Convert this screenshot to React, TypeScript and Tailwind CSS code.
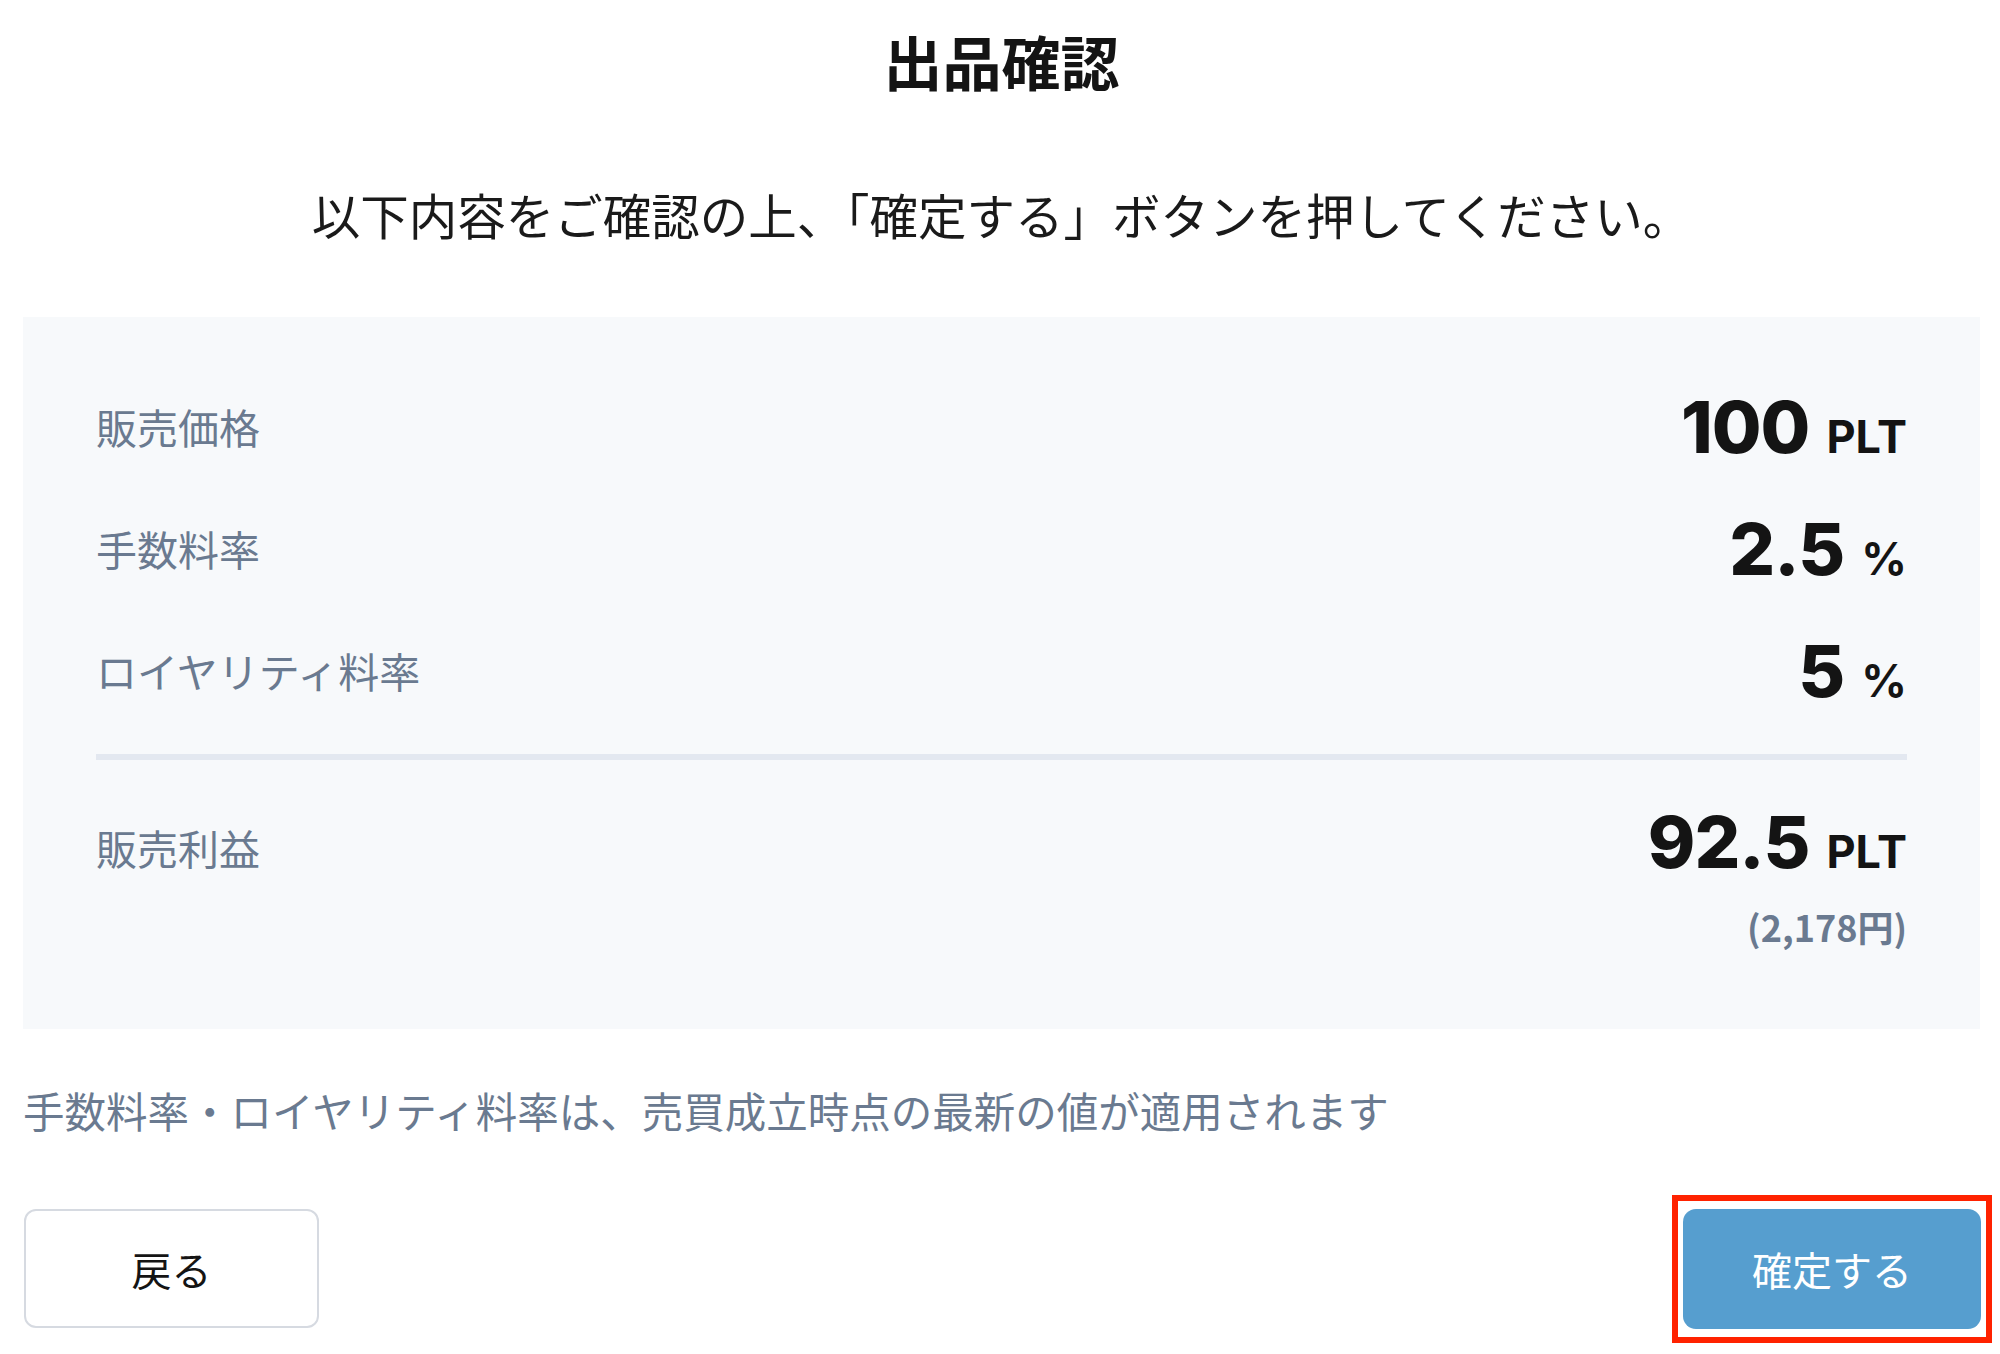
import React from "react";

const jp = { fontFamily: '"Noto Sans CJK JP", "Noto Sans", sans-serif' };
const num = { fontFamily: 'Inter, "Noto Sans CJK JP", sans-serif' };

function Row({ label, value, unit }: { label: string; value: string; unit: string }) {
  return (
    <div className="flex h-[122px] items-center justify-between">
      <div className="text-[41px] leading-none text-[#6a7a90]" style={jp}>
        {label}
      </div>
      <div className="flex items-baseline leading-none text-[#141414]" style={num}>
        <span className="text-[72px] font-extrabold tracking-[-1px]">{value}</span>
        <span className="ml-[17px] text-[45px] font-bold">{unit}</span>
      </div>
    </div>
  );
}

export default function App() {
  return (
    <div className="h-[1354px] w-[2000px] bg-white pl-[23px] pr-[20px]" style={jp}>
      <div className="flex justify-center pt-[31px]">
        <h1 className="text-[59px] font-bold leading-none text-[#141414]">出品確認</h1>
      </div>
      <div className="mt-[100px] flex justify-center">
        <p className="text-[48.5px] leading-none text-[#1a1a1a]">
          以下内容をご確認の上、「確定する」ボタンを押してください。
        </p>
      </div>

      <div className="mt-[78px] h-[712px] bg-[#f7f9fb] px-[73px] pt-[49px]">
        <Row label="販売価格" value="100" unit="PLT" />
        <Row label="手数料率" value="2.5" unit="%" />
        <Row label="ロイヤリティ料率" value="5" unit="%" />
        <div className="mt-[22px] h-[6px] bg-[#e3e8f0]" />
        <div className="flex items-start justify-between pt-[46px]">
          <div className="mt-[21px] text-[41px] leading-none text-[#6a7a90]">販売利益</div>
          <div className="flex flex-col items-end">
            <div className="flex items-baseline leading-none text-[#141414]" style={num}>
              <span className="text-[72px] font-extrabold tracking-[-1px]">92.5</span>
              <span className="ml-[17px] text-[45px] font-bold">PLT</span>
            </div>
            <div className="mt-[30px] text-[36px] font-bold leading-none text-[#6a7a90]">(2,178円)</div>
          </div>
        </div>
      </div>

      <p className="mt-[61px] text-[41.5px] leading-none text-[#6a7a90]">
        手数料率・ロイヤリティ料率は、売買成立時点の最新の値が適用されます
      </p>

      <div className="mt-[78px] flex items-start justify-between">
        <button className="ml-[1px] flex h-[119px] w-[295px] items-center justify-center rounded-[12px] border-2 border-[#d6dae1] bg-white text-[40px] text-[#141414]">
          戻る
        </button>
        <div className="relative mr-[-1px]">
          <div className="pointer-events-none absolute -bottom-[14px] -left-[11px] -right-[11px] -top-[14px] border-[6px] border-[#ff2200]" />
          <button className="flex h-[120px] w-[298px] items-center justify-center rounded-[13px] bg-[#569ecf] text-[40px] text-white">
            確定する
          </button>
        </div>
      </div>
    </div>
  );
}
